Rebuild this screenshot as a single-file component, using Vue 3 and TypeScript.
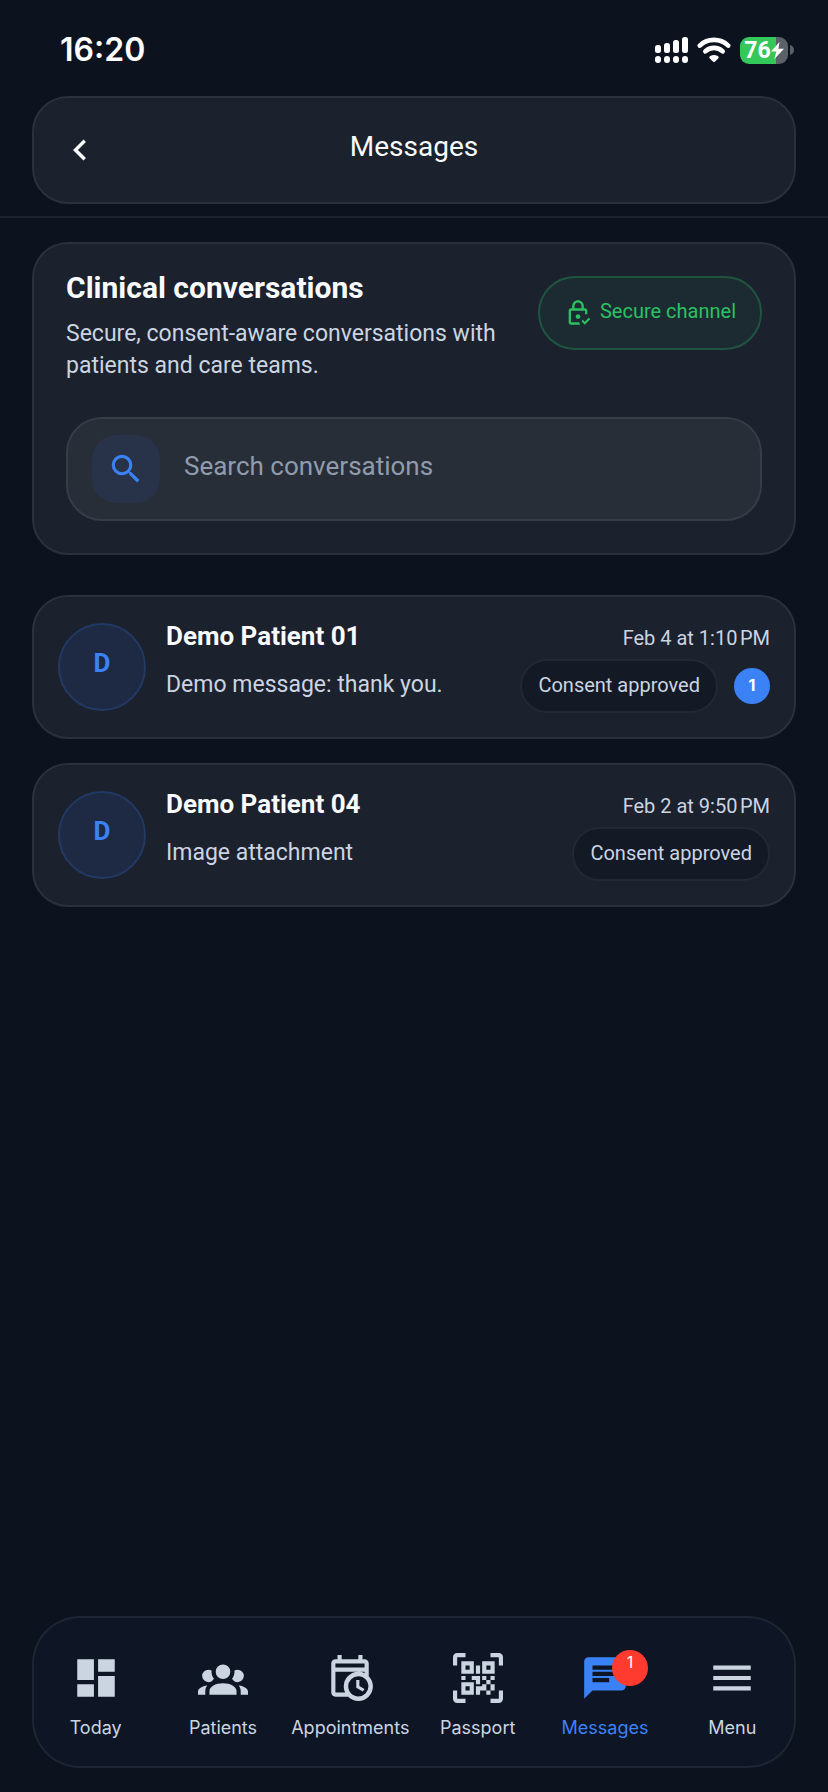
<script setup lang="ts">
import { ref } from 'vue'

interface Conversation {
  id: number
  initial: string
  name: string
  preview: string
  time: string
  consent: string
  unread: number
}

interface Tab {
  label: string
  path: string
  active?: boolean
  badge?: number
}

const query = ref('')

const conversations: Conversation[] = [
  { id: 1, initial: 'D', name: 'Demo Patient 01', preview: 'Demo message: thank you.', time: 'Feb 4 at 1:10\u202fPM', consent: 'Consent approved', unread: 1 },
  { id: 4, initial: 'D', name: 'Demo Patient 04', preview: 'Image attachment', time: 'Feb 2 at 9:50\u202fPM', consent: 'Consent approved', unread: 0 },
]

const tabs: Tab[] = [
  { label: 'Today', path: 'M3 13h8V3H3v10zm0 8h8v-6H3v6zm10 0h8V11h-8v10zm0-18v6h8V3h-8z' },
  { label: 'Patients', path: 'M12,5.5A3.5,3.5 0 0,1 15.5,9A3.5,3.5 0 0,1 12,12.5A3.5,3.5 0 0,1 8.5,9A3.5,3.5 0 0,1 12,5.5M5,8C5.56,8 6.08,8.15 6.53,8.42C6.38,9.85 6.8,11.27 7.66,12.38C7.16,13.34 6.16,14 5,14A3,3 0 0,1 2,11A3,3 0 0,1 5,8M19,8A3,3 0 0,1 22,11A3,3 0 0,1 19,14C17.84,14 16.84,13.34 16.34,12.38C17.2,11.27 17.62,9.85 17.47,8.42C17.92,8.15 18.44,8 19,8M5.5,18.25C5.5,16.18 8.41,14.5 12,14.5C15.59,14.5 18.5,16.18 18.5,18.25V20H5.5V18.25M0,20V18.5C0,17.11 1.89,15.94 4.45,15.6C3.86,16.28 3.5,17.22 3.5,18.25V20H0M24,20H20.5V18.25C20.5,17.22 20.14,16.28 19.55,15.6C22.11,15.94 24,17.11 24,18.5V20Z' },
  { label: 'Appointments', path: 'M15,13H16.5V15.82L18.94,17.23L18.19,18.53L15,16.69V13M5,5V7H19V5H5M19,9H5V19H9.67C9.24,18.09 9,17.07 9,16A7,7 0 0,1 16,9C17.07,9 18.09,9.24 19,9.67V9M5,21C3.89,21 3,20.1 3,19V5C3,3.89 3.89,3 5,3H6V1H8V3H16V1H18V3H19A2,2 0 0,1 21,5V11.1C22.24,12.36 23,14.09 23,16A7,7 0 0,1 16,23C14.09,23 12.36,22.24 11.1,21H5M16,11.15A4.85,4.85 0 0,0 11.15,16C11.15,18.68 13.32,20.85 16,20.85A4.85,4.85 0 0,0 20.85,16C20.85,13.32 18.68,11.15 16,11.15Z' },
  { label: 'Passport', path: 'M4,4H10V10H4V4M20,4V10H14V4H20M14,15H16V13H14V11H16V13H18V11H20V13H18V15H20V18H18V20H16V18H13V20H11V16H14V15M16,15V18H18V15H16M4,20V14H10V20H4M6,6V8H8V6H6M16,6V8H18V6H16M6,16V18H8V16H6M4,11H6V13H4V11M9,11H13V15H11V13H9V11M11,6H13V10H11V6M2,2V6H0V2A2,2 0 0,1 2,0H6V2H2M22,0A2,2 0 0,1 24,2V6H22V2H18V0H22M2,18V22H6V24H2A2,2 0 0,1 0,22V18H2M22,22V18H24V22A2,2 0 0,1 22,24H18V22H22Z' },
  { label: 'Messages', active: true, badge: 1, path: 'M20 2H4c-1.1 0-1.99.9-1.99 2L2 22l4-4h14c1.1 0 2-.9 2-2V4c0-1.1-.9-2-2-2zM6 9h12v2H6V9zm8 5H6v-2h8v2zm4-6H6V6h12v2z' },
  { label: 'Menu', path: 'M3 18h18v-2H3v2zm0-5h18v-2H3v2zm0-7v2h18V6H3z' },
]
</script>

<template>
  <div class="screen">
    <div class="status">
      <span class="clock">16:20</span>
      <div class="indicators">
        <svg class="signal" viewBox="0 0 33 26" aria-hidden="true">
          <rect x="0" y="8" width="6" height="8" rx="2.5" />
          <rect x="9" y="6" width="6" height="10" rx="2.5" />
          <rect x="18" y="3" width="6" height="13" rx="2.5" />
          <rect x="27" y="0" width="6" height="16" rx="2.5" />
          <rect x="0" y="19" width="6" height="7" rx="3" />
          <rect x="9" y="19" width="6" height="7" rx="3" />
          <rect x="18" y="19" width="6" height="7" rx="3" />
          <rect x="27" y="19" width="6" height="7" rx="3" />
        </svg>
        <svg class="wifi" viewBox="0 0 34 26" aria-hidden="true">
          <path class="arc" d="M2.8 8.6A20.5 20.5 0 0 1 31.2 8.6" />
          <path class="arc" d="M8.3 14.4A12.6 12.6 0 0 1 25.7 14.4" />
          <path d="M17 25.2c-.7 0-4.8-3.9-4.8-4.9 0-1.2 2.6-2.3 4.8-2.3s4.8 1.1 4.8 2.3c0 1-4.1 4.9-4.8 4.9z" />
        </svg>
        <div class="power">
          <div class="battery">
            <span>76</span>
            <svg class="bolt" viewBox="0 0 13 17" aria-hidden="true"><path d="M8.5 0 0 9.6h5.3L3.4 17 13 6.8H7.4z" /></svg>
          </div>
          <svg class="nub" viewBox="0 0 4 10" aria-hidden="true"><path d="M0 0c2.4.7 4 2.6 4 5s-1.600 4.300-4 5z" /></svg>
        </div>
      </div>
    </div>

    <header class="topbar">
      <div class="panel titlebar">
        <button class="back" type="button" aria-label="Back">
          <svg viewBox="0 0 24 24" aria-hidden="true"><path d="M15.41,16.58L10.83,12L15.41,7.41L14,6L8,12L14,18L15.41,16.58Z" /></svg>
        </button>
        <h1>Messages</h1>
      </div>
    </header>

    <main>
      <section class="panel overview">
        <div class="intro">
          <div class="copy">
            <h2>Clinical conversations</h2>
            <p>Secure, consent-aware conversations with patients and care teams.</p>
          </div>
          <div class="secure">
            <svg viewBox="0 0 24 24" aria-hidden="true"><path d="M14 15C14 16.11 13.11 17 12 17C10.89 17 10 16.1 10 15C10 13.89 10.89 13 12 13C13.11 13 14 13.9 14 15M13.09 20C13.21 20.72 13.46 21.39 13.81 22H6C4.89 22 4 21.1 4 20V10C4 8.89 4.89 8 6 8H7V6C7 3.24 9.24 1 12 1S17 3.24 17 6V8H18C19.11 8 20 8.9 20 10V13.09C19.67 13.04 19.34 13 19 13C18.66 13 18.33 13.04 18 13.09V10H6V20H13.09M9 8H15V6C15 4.34 13.66 3 12 3S9 4.34 9 6V8M21.34 15.84L17.75 19.43L16.16 17.84L15 19L17.75 22L22.5 17.25L21.34 15.84Z" /></svg>
            <span>Secure channel</span>
          </div>
        </div>
        <label class="search">
          <span class="tile">
            <svg viewBox="0 0 24 24" aria-hidden="true"><path d="M15.5 14h-.79l-.28-.27A6.471 6.471 0 0 0 16 9.5 6.5 6.5 0 1 0 9.5 16c1.61 0 3.09-.59 4.23-1.57l.27.28v.79l5 4.99L20.49 19l-4.99-5zm-6 0C7.01 14 5 11.99 5 9.5S7.01 5 9.5 5 14 7.01 14 9.5 11.99 14 9.5 14z" /></svg>
          </span>
          <input v-model="query" type="search" placeholder="Search conversations" aria-label="Search conversations" />
        </label>
      </section>

      <ul class="list">
        <li v-for="c in conversations" :key="c.id">
          <a class="panel row" href="#">
            <span class="avatar">{{ c.initial }}</span>
            <span class="body">
              <strong>{{ c.name }}</strong>
              <span class="preview">{{ c.preview }}</span>
            </span>
            <span class="meta">
              <time>{{ c.time }}</time>
              <span class="tags">
                <span class="consent">{{ c.consent }}</span>
                <span v-if="c.unread" class="unread">{{ c.unread }}</span>
              </span>
            </span>
          </a>
        </li>
      </ul>
    </main>

    <nav class="tabs">
      <a v-for="t in tabs" :key="t.label" href="#" class="tab" :class="{ active: t.active }">
        <span class="icon">
          <svg viewBox="0 0 24 24" aria-hidden="true"><path fill-rule="evenodd" :d="t.path" /></svg>
          <span v-if="t.badge" class="badge">{{ t.badge }}</span>
        </span>
        <span>{{ t.label }}</span>
      </a>
    </nav>
  </div>
</template>

<style>
body {
  margin: 0;
  background: #0c121e;
}
</style>

<style scoped>
.screen {
  box-sizing: border-box;
  min-height: 100vh;
  display: flex;
  flex-direction: column;
  padding-bottom: 24px;
  background: #0c121e;
  color: #f8fafc;
  font-family: Roboto, "Liberation Sans", sans-serif;
}

.screen * {
  box-sizing: border-box;
}

svg {
  display: block;
  flex: none;
  fill: currentColor;
}

a {
  color: inherit;
  text-decoration: none;
}

.status {
  display: flex;
  align-items: center;
  justify-content: space-between;
  height: 96px;
  padding: 4px 34px 0 60px;
  color: #fff;
}

.clock {
  font: 600 32px/40px Inter, sans-serif;
}

.indicators {
  display: flex;
  align-items: center;
  gap: 9px;
}

.signal {
  width: 33px;
  height: 26px;
}

.wifi {
  width: 34px;
  height: 26px;
}

.arc {
  fill: none;
  stroke: currentColor;
  stroke-width: 4.6;
  stroke-linecap: round;
}

.power {
  display: flex;
  align-items: center;
  gap: 2px;
}

.battery {
  display: flex;
  align-items: center;
  justify-content: center;
  width: 48px;
  height: 27px;
  border-radius: 9px;
  background: linear-gradient(90deg, #34c759 75%, #5c6069 75%);
  font: 700 23px/27px Roboto, sans-serif;
}

.bolt {
  width: 13px;
  height: 17px;
}

.nub {
  width: 4px;
  height: 10px;
  color: #5c6069;
}

.panel {
  border: 2px solid #2b313c;
  border-radius: 36px;
  background: #1b212d;
}

.topbar {
  padding: 0 32px 12px;
  border-bottom: 2px solid #1c222e;
}

.titlebar {
  display: grid;
  grid-template-columns: 42px 1fr 42px;
  align-items: center;
  height: 108px;
  padding: 0 25px;
}

.back {
  width: 42px;
  height: 42px;
  padding: 0;
  border: 0;
  background: none;
  color: inherit;
}

h1 {
  margin: 0;
  padding-bottom: 6px;
  font-size: 28px;
  line-height: 36px;
  font-weight: 400;
  text-align: center;
}

main {
  display: flex;
  flex-direction: column;
  gap: 40px;
  padding: 24px 32px;
}

.overview {
  display: flex;
  flex-direction: column;
  gap: 35px;
  padding: 32px;
}

.intro {
  display: flex;
  align-items: flex-start;
  gap: 24px;
}

.copy {
  flex: 1;
  display: flex;
  flex-direction: column;
  gap: 18px;
}

h2 {
  margin: 0;
  font-size: 30px;
  line-height: 24px;
  font-weight: 700;
}

p {
  margin: 0;
  color: #cbd5e1;
  font-size: 23px;
  line-height: 32px;
}

.secure {
  display: flex;
  align-items: center;
  gap: 8px;
  height: 74px;
  padding: 0 24px;
  border: 2px solid #1f5540;
  border-radius: 37px;
  background: #1c2b31;
  color: #2bc163;
  font-size: 20px;
  line-height: 24px;
  white-space: nowrap;
}

.secure span {
  padding-bottom: 4px;
}

.secure svg {
  width: 28px;
  height: 28px;
}

.search {
  display: flex;
  align-items: center;
  gap: 24px;
  height: 104px;
  padding: 0 24px;
  border: 2px solid #373c47;
  border-radius: 36px;
  background: #282e38;
}

.tile {
  display: grid;
  place-items: center;
  width: 68px;
  height: 68px;
  border-radius: 24px;
  background: #283248;
  color: #3b82f6;
}

.tile svg {
  width: 38px;
  height: 38px;
}

input {
  flex: 1;
  min-width: 0;
  padding: 0 0 6px;
  border: 0;
  outline: 0;
  background: none;
  color: inherit;
  font: 26px/34px Roboto, sans-serif;
  appearance: none;
}

input::placeholder {
  color: #909cae;
  opacity: 1;
}

.list {
  display: flex;
  flex-direction: column;
  gap: 24px;
  margin: 0;
  padding: 0;
  list-style: none;
}

.row {
  display: flex;
  align-items: center;
  gap: 20px;
  padding: 24px;
}

.avatar {
  display: grid;
  place-items: center;
  flex: none;
  width: 88px;
  height: 88px;
  padding-bottom: 8px;
  border: 2px solid #223a63;
  border-radius: 50%;
  background: #1e2a43;
  color: #3b82f6;
  font-size: 26px;
  font-weight: 700;
}

.body {
  flex: 1;
  min-width: 0;
  align-self: flex-start;
  display: flex;
  flex-direction: column;
  gap: 18px;
}

strong {
  font-size: 26px;
  line-height: 30px;
  font-weight: 700;
}

.preview {
  color: #cbd5e1;
  font-size: 23px;
  line-height: 32px;
}

.meta {
  display: flex;
  flex-direction: column;
  align-items: flex-end;
  gap: 4px;
  color: #cbd5e1;
  font-size: 20px;
  white-space: nowrap;
}

time {
  line-height: 34px;
}

.tags {
  display: flex;
  align-items: center;
  gap: 16px;
}

.consent {
  height: 54px;
  padding: 10px 16px;
  border: 2px solid #222935;
  border-radius: 27px;
  background: #131a26;
  line-height: 28px;
}

.unread,
.badge {
  display: grid;
  place-items: center;
  width: 36px;
  height: 36px;
  border-radius: 50%;
  color: #fff;
}

.unread {
  padding-bottom: 2px;
  background: #3b82f6;
  font: 700 16px/20px Inter, sans-serif;
}

.tabs {
  display: grid;
  grid-template-columns: repeat(6, 1fr);
  margin: auto 32px 0;
  padding: 37px 0 28px;
  border-radius: 48px;
  background: #0e1625;
  box-shadow: inset 0 0 0 2px #1e2634;
  color: #cbd5e1;
  font: 18px/24px Inter, sans-serif;
}

.tab {
  display: flex;
  flex-direction: column;
  align-items: center;
  gap: 13px;
}

.tab.active {
  color: #3b82f6;
}

.icon {
  position: relative;
}

.icon svg {
  width: 50px;
  height: 50px;
}

.badge {
  position: absolute;
  top: -3px;
  right: -18px;
  padding-bottom: 12px;
  background: #ff3b30;
  font: 16px/20px Inter, sans-serif;
}
</style>
